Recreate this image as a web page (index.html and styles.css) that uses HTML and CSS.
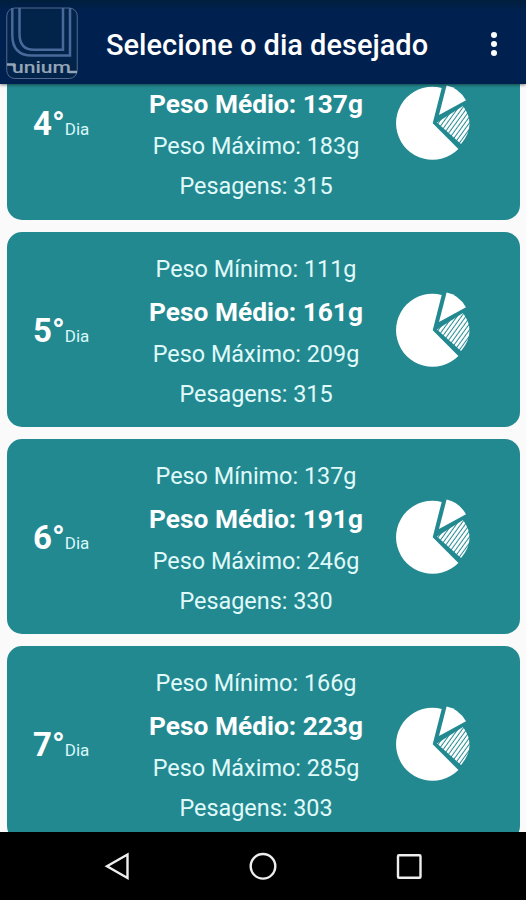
FILE: index.html
```html
<!DOCTYPE html>
<html lang="pt-BR">

<head>
  <meta charset="UTF-8">
  <meta name="viewport" content="width=device-width, initial-scale=1.0">
  <title>Selecione o dia desejado</title>
  <link rel="stylesheet" href="styles.css">
</head>

<body>
  <header class="topbar">
    <svg class="logo" width="72" height="74" viewBox="0 0 72 74">
      <rect class="logo-box" x=".75" y="2" width="70.5" height="70.5" rx="8" />
      <path class="logo-line" d="M6.300 2V29Q6.300 49.500 26 49.500H64V2" />
      <path class="logo-line" d="M13.500 2V28Q13.500 43.800 28 43.800H57V2" />
      <path class="logo-word-line" d="M1 58.500H8V61M63 66H71" />
      <text class="logo-word" x="6" y="67" textLength="59" lengthAdjust="spacingAndGlyphs">unium</text>
    </svg>
    <h1>Selecione o dia desejado</h1>
    <svg class="menu" width="10" height="26" viewBox="0 0 10 26">
      <circle cx="5" cy="4" r="3" />
      <circle cx="5" cy="13" r="3" />
      <circle cx="5" cy="22" r="3" />
    </svg>
  </header>

  <!-- Desenho do gráfico usado em todos os cartões -->
  <svg class="defs" width="0" height="0">
    <defs>
      <pattern id="hatch" width="3.600" height="3.600" patternUnits="userSpaceOnUse" patternTransform="rotate(36)">
        <rect width="2.600" height="3.600" fill="#fff" />
      </pattern>
      <symbol id="pizza" viewBox="0 0 76 77">
        <path fill="#fff" d="M36.700 39.300L45.700 3.900A36.500 36.500 0 1 0 62.400 65Z" />
        <path fill="#fff" d="M43 31L50.600 1.500Q63 4 70 16.300Z" />
        <path fill="url(#hatch)" d="M41 38.500L67 22Q81 41 65 60Z" />
      </symbol>
    </defs>
  </svg>

  <main class="lista">
    <section class="card">
      <div class="dia"><b>4°</b><span>Dia</span></div>
      <div class="pesos">
        <p class="medio">Peso Médio: 137g</p>
        <p>Peso Máximo: 183g</p>
        <p>Pesagens: 315</p>
      </div>
      <svg class="grafico"><use href="#pizza" /></svg>
    </section>

    <section class="card">
      <div class="dia"><b>5°</b><span>Dia</span></div>
      <div class="pesos">
        <p>Peso Mínimo: 111g</p>
        <p class="medio">Peso Médio: 161g</p>
        <p>Peso Máximo: 209g</p>
        <p>Pesagens: 315</p>
      </div>
      <svg class="grafico"><use href="#pizza" /></svg>
    </section>

    <section class="card">
      <div class="dia"><b>6°</b><span>Dia</span></div>
      <div class="pesos">
        <p>Peso Mínimo: 137g</p>
        <p class="medio">Peso Médio: 191g</p>
        <p>Peso Máximo: 246g</p>
        <p>Pesagens: 330</p>
      </div>
      <svg class="grafico"><use href="#pizza" /></svg>
    </section>

    <section class="card">
      <div class="dia"><b>7°</b><span>Dia</span></div>
      <div class="pesos">
        <p>Peso Mínimo: 166g</p>
        <p class="medio">Peso Médio: 223g</p>
        <p>Peso Máximo: 285g</p>
        <p>Pesagens: 303</p>
      </div>
      <svg class="grafico"><use href="#pizza" /></svg>
    </section>
  </main>

  <nav class="navbar">
    <svg width="30" height="30" viewBox="0 0 30 30"><path d="M25.500 3.500V27L5 15.200Z" /></svg>
    <svg width="30" height="30" viewBox="0 0 30 30"><circle cx="15" cy="15.300" r="12.300" /></svg>
    <svg width="30" height="30" viewBox="0 0 30 30"><rect x="4" y="4.300" width="22.500" height="22.500" rx="1" /></svg>
  </nav>
</body>

</html>
```
FILE: styles.css
```css
* {
  box-sizing: border-box;
}

body {
  display: flex;
  flex-direction: column;
  height: 900px;
  margin: 0;
  overflow: hidden;
  background-color: #fafafa;
  font-family: Roboto, sans-serif;
  color: #fff;
}

.topbar {
  display: flex;
  flex: none;
  align-items: flex-start;
  height: 84px;
  padding: 6px 27px 0 6px;
  background: linear-gradient(#001f3c, #00204f 10px);
  box-shadow: 0 1px 3px rgba(0, 0, 0, .5);
  z-index: 1;
}

.topbar h1 {
  flex: 1;
  margin: 22px 0 0 28px;
  font-size: 29px;
  font-weight: 500;
  line-height: 34px;
  white-space: nowrap;
}

.menu {
  margin-top: 25px;
  fill: #fff;
}

.logo-box {
  fill: #03244a;
  stroke: #52688c;
  stroke-width: 1;
}

.logo-line {
  fill: none;
  stroke: #49699a;
  stroke-width: 2.5;
}

.logo-word-line {
  fill: none;
  stroke: #94a5b8;
  stroke-width: 2.5;
}

.logo-word {
  fill: #94a5b8;
  font-size: 17px;
  font-weight: 500;
}

.defs {
  position: absolute;
}

.lista {
  display: flex;
  flex: 1;
  flex-direction: column;
  gap: 12px;
  min-height: 0;
  padding: 0 6px 0 7px;
  overflow: hidden;
}

.card {
  display: grid;
  flex: none;
  grid-template-columns: 119px 260px 1fr;
  height: 195px;
  border-radius: 15px;
  background-color: #238991;
}

/* lista já rolada até o 4° dia */
.card:first-child {
  margin-top: -59px;
}

.card:first-child .pesos {
  padding-top: 57px;
}

.dia {
  padding: 79px 0 0 26px;
  line-height: 40px;
  white-space: nowrap;
}

.dia b {
  font-size: 33px;
}

.dia span {
  font-size: 17px;
  color: #d9f7f8;
}

.pesos {
  padding-top: 17px;
  text-align: center;
}

.pesos p {
  margin: 0;
  font-size: 23.4px;
  line-height: 41px;
  color: #e0fafa;
}

.pesos .medio {
  height: 44px;
  font-size: 26.3px;
  font-weight: bold;
  line-height: 44px;
  color: #fff;
}

.pesos p:last-child {
  line-height: 38px;
}

.grafico {
  width: 76px;
  height: 77px;
  margin: 59px 0 0 10px;
}

.navbar {
  display: flex;
  flex: none;
  align-items: center;
  justify-content: center;
  gap: 116px;
  height: 68px;
  background-color: #000;
}

.navbar svg {
  fill: none;
  stroke: #eee;
  stroke-width: 2.4;
}
```
